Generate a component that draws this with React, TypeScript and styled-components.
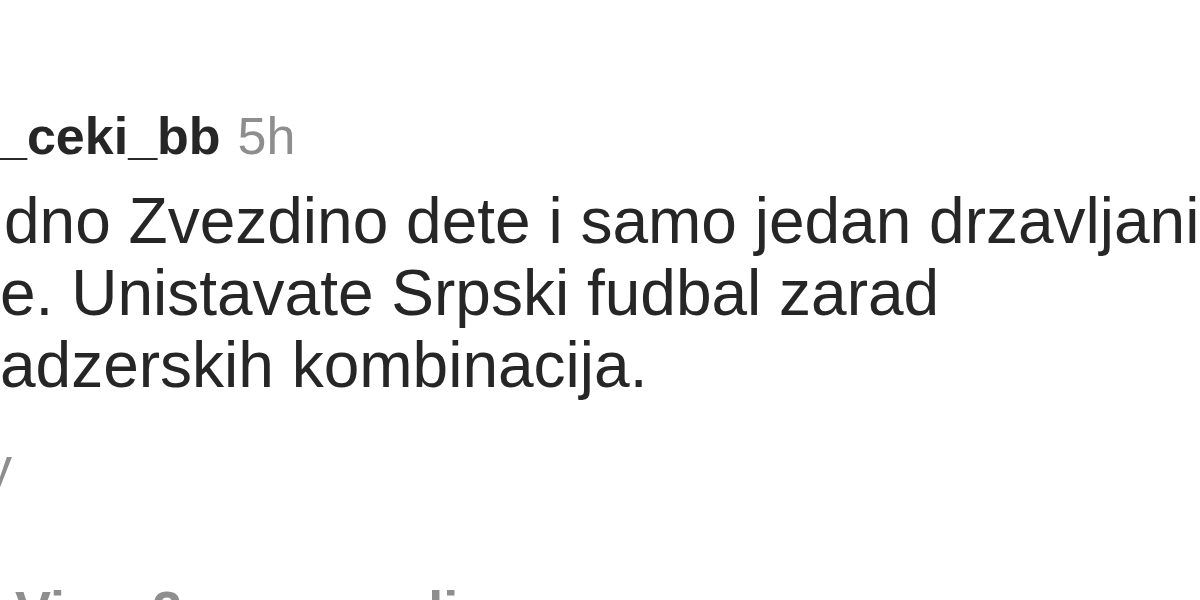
import React from "react";
import styled, { createGlobalStyle } from "styled-components";

const Global = createGlobalStyle`
  html, body {
    margin: 0;
    padding: 0;
    background: #ffffff;
  }
  body {
    width: 1200px;
    height: 600px;
    overflow: hidden;
    font-family: "Liberation Sans", Arial, sans-serif;
    -webkit-font-smoothing: antialiased;
  }
`;

const Page = styled.div`
  width: 1200px;
  height: 600px;
  overflow: hidden;
  padding-top: 106px;
  box-sizing: border-box;
  display: flex;
  flex-direction: column;
`;

const Header = styled.div`
  display: flex;
  align-items: baseline;
  gap: 17px;
  font-size: 52px;
  line-height: 60px;
  white-space: nowrap;
`;

const Username = styled.span`
  font-weight: 700;
  color: #262626;
  margin-left: -2px;
`;

const Time = styled.span`
  font-weight: 400;
  color: #8e8e8e;
`;

const Body = styled.div`
  margin-top: 19px;
  display: flex;
  flex-direction: column;
  font-size: 64px;
  line-height: 72px;
  color: #262626;
  white-space: nowrap;
`;

const Line = styled.span<{ $shift?: number }>`
  display: block;
  margin-left: ${(p) => p.$shift ?? 0}px;
`;

const Actions = styled.div`
  margin-top: 34px;
  font-size: 54px;
  line-height: 62px;
  color: #8e8e8e;
  font-weight: 400;
  white-space: nowrap;
`;

const ReplyLabel = styled.span`
  display: inline-block;
  margin-left: -126px;
`;

const MoreReplies = styled.div`
  margin-top: 82px;
  margin-left: 15px;
  font-size: 54px;
  line-height: 62px;
  font-weight: 700;
  color: #8e8e8e;
  white-space: nowrap;
`;

export default function App() {
  return (
    <>
      <Global />
      <Page>
        <Header>
          <Username>_ceki_bb</Username>
          <Time>5h</Time>
        </Header>
        <Body>
          <Line $shift={4}>dno Zvezdino dete i samo jedan drzavljanin</Line>
          <Line>e. Unistavate Srpski fudbal zarad</Line>
          <Line>adzerskih kombinacija.</Line>
        </Body>
        <Actions>
          <ReplyLabel>Reply</ReplyLabel>
        </Actions>
        <MoreReplies>View 2 more replies</MoreReplies>
      </Page>
    </>
  );
}
